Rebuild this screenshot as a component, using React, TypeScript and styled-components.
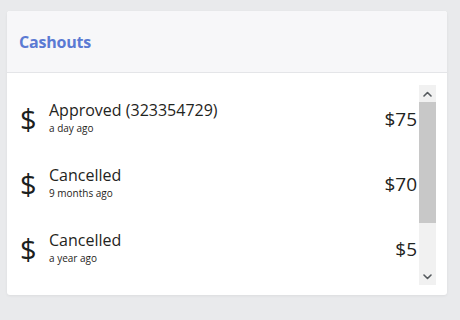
import React from "react";
import styled, { createGlobalStyle } from "styled-components";

const GlobalStyle = createGlobalStyle`
  html, body { margin: 0; padding: 0; }
  body {
    background: #e9eaec;
    font-family: "Open Sans", "Liberation Sans", sans-serif;
    color: #1f2421;
  }
`;

const Page = styled.div`
  padding: 11px 13px 25px 7px;
  width: 460px;
  height: 320px;
  box-sizing: border-box;
`;

const Card = styled.section`
  background: #ffffff;
  border-radius: 3px;
  box-shadow: 0 1px 3px rgba(0, 0, 0, 0.06);
  display: flex;
  flex-direction: column;
  height: 284px;
  overflow: hidden;
`;

const Header = styled.header`
  height: 62px;
  box-sizing: border-box;
  background: #f7f7f9;
  border-bottom: 1px solid #e4e5e8;
  display: flex;
  align-items: center;
  padding: 0 12px;
`;

const Title = styled.h2`
  margin: 0;
  font-size: 16px;
  font-weight: 700;
  color: #5b7ad3;
  letter-spacing: -0.2px;
`;

const Body = styled.div`
  flex: 1;
  padding: 12px 11px 10px 12px;
  display: flex;
  min-height: 0;
`;

const List = styled.ul`
  list-style: none;
  margin: 0;
  padding: 0;
  flex: 1;
  height: 200px;
  overflow: hidden;
`;

const Row = styled.li`
  height: 65px;
  display: flex;
  align-items: center;
  padding: 0 2px 0 1px;
`;

const Dollar = styled.span`
  width: 29px;
  font-size: 29px;
  line-height: 1;
  font-weight: 400;
  color: #1b211d;
  margin-top: 2px;
`;

const Info = styled.div`
  flex: 1;
  display: flex;
  flex-direction: column;
`;

const Status = styled.span`
  font-size: 16px;
  line-height: 20px;
  color: #1f2421;
`;

const When = styled.span`
  font-size: 10px;
  line-height: 16px;
  color: #1f2421;
`;

const Amount = styled.span`
  font-size: 19px;
  color: #1f2421;
  margin-top: 3px;
`;

const ScrollBar = styled.div`
  width: 17px;
  height: 200px;
  background: #f1f1f1;
  display: flex;
  flex-direction: column;
`;

const ScrollButton = styled.div`
  height: 17px;
  flex: none;
  display: flex;
  align-items: center;
  justify-content: center;
`;

const Track = styled.div`
  flex: 1;
  display: flex;
  flex-direction: column;
`;

const Thumb = styled.div<{ $size: number }>`
  height: ${(p) => p.$size}px;
  background: #c8c8c8;
`;

const Chevron = ({ up }: { up?: boolean }) => (
  <svg width="9" height="6" viewBox="0 0 9 6">
    <path
      d={up ? "M1 5 L4.5 1.5 L8 5" : "M1 1 L4.5 4.5 L8 1"}
      fill="none"
      stroke="#555a5e"
      strokeWidth="1.6"
      strokeLinecap="round"
      strokeLinejoin="round"
    />
  </svg>
);

const items = [
  { status: "Approved (323354729)", when: "a day ago", amount: "$75" },
  { status: "Cancelled", when: "9 months ago", amount: "$70" },
  { status: "Cancelled", when: "a year ago", amount: "$5" },
];

export default function App() {
  return (
    <>
      <GlobalStyle />
      <Page>
        <Card>
          <Header>
            <Title>Cashouts</Title>
          </Header>
          <Body>
            <List>
              {items.map((it, i) => (
                <Row key={i}>
                  <Dollar>$</Dollar>
                  <Info>
                    <Status>{it.status}</Status>
                    <When>{it.when}</When>
                  </Info>
                  <Amount>{it.amount}</Amount>
                </Row>
              ))}
            </List>
            <ScrollBar>
              <ScrollButton>
                <Chevron up />
              </ScrollButton>
              <Track>
                <Thumb $size={121} />
              </Track>
              <ScrollButton>
                <Chevron />
              </ScrollButton>
            </ScrollBar>
          </Body>
        </Card>
      </Page>
    </>
  );
}
